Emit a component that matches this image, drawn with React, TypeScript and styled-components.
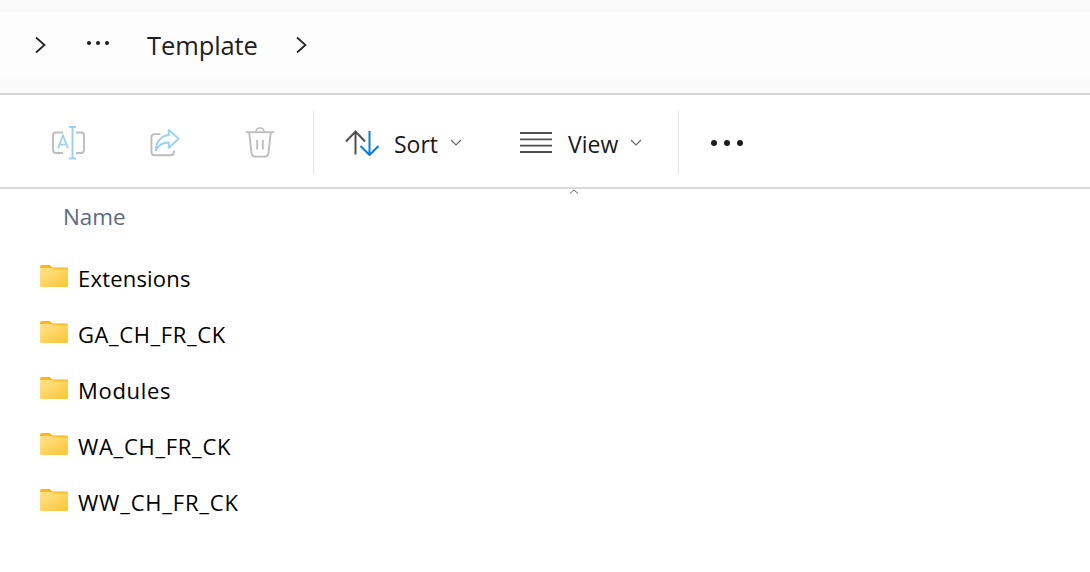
import React from "react";
import styled, { createGlobalStyle } from "styled-components";

const GlobalStyle = createGlobalStyle`
  html, body {
    margin: 0;
    padding: 0;
    background: #fff;
    font-family: "Open Sans", "Noto Sans", sans-serif;
  }
`;

const folders = [
  { name: "Extensions", tracking: 0.2 },
  { name: "GA_CH_FR_CK", tracking: 0.6 },
  { name: "Modules", tracking: 0.7 },
  { name: "WA_CH_FR_CK", tracking: 0.7 },
  { name: "WW_CH_FR_CK", tracking: 0.8 },
];

const Chevron = () => (
  <svg width="14" height="18" viewBox="0 0 14 18" fill="none">
    <path d="M3 1.5 L11.5 9 L3 16.5" stroke="#222" strokeWidth="1.7" />
  </svg>
);

const SmallCaret = () => (
  <svg width="12" height="8" viewBox="0 0 12 8" fill="none">
    <path d="M1 1 L6 6 L11 1" stroke="#666" strokeWidth="1.2" />
  </svg>
);

const RenameIcon = () => (
  <svg width="34" height="34" viewBox="0 0 34 34" fill="none">
    <path d="M12 6.5 H5 Q2 6.5 2 9.5 V24 Q2 27 5 27 H12 M25 6.5 H30 Q33 6.5 33 9.5 V24 Q33 27 30 27 H25" stroke="#bdbdbd" strokeWidth="1.9" />
    <path d="M18 1 H25 M18 32.5 H25 M21.5 1 V32.5" stroke="#9bcff4" strokeWidth="1.9" />
    <path d="M7 22.5 L12 9.5 L17 22.5 M8.6 18.5 H15.4" stroke="#9bcff4" strokeWidth="1.7" />
  </svg>
);

const ShareIcon = () => (
  <svg width="30" height="30" viewBox="0 0 32 32" fill="none">
    <path d="M11 6.5 H5 Q1.5 6.5 1.5 10 V25.5 Q1.5 29 5 29 H22 Q25.5 29 25.5 25.5 V24" stroke="#bdbdbd" strokeWidth="2" />
    <path d="M20 2 L30.5 11.5 L20 21 V15.5 C13 15.5 9 18.5 6 24 C6.5 15 12 8 20 7.5 Z" stroke="#9bcff4" strokeWidth="2" strokeLinejoin="round" />
  </svg>
);

const TrashIcon = () => (
  <svg width="30" height="32" viewBox="0 0 32 34" fill="none" stroke="#bdbdbd">
    <path d="M1 5.5 H31" strokeWidth="2" />
    <path d="M11.5 5 Q12 1 16 1 Q20 1 20.5 5" strokeWidth="1.6" />
    <path d="M4.5 6 L7 28 Q7.5 31.5 11 31.5 H21 Q24.5 31.5 25 28 L27.5 6" strokeWidth="2" />
    <path d="M13 13.5 V24 M19 13.5 V24" strokeWidth="2" />
  </svg>
);

const SortIcon = () => (
  <svg width="34" height="26" viewBox="0 0 34 26" fill="none">
    <path d="M1 11.5 L10.5 1.5 L20 11.5 M10.5 1.5 V24.5" stroke="#4f4f4f" strokeWidth="2" />
    <path d="M15.5 16 L24.5 25 L33.5 16 M24.5 1 V25" stroke="#0b7ddb" strokeWidth="2" />
  </svg>
);

const ViewIcon = () => (
  <svg width="33" height="21" viewBox="0 0 33 21" fill="none" stroke="#4f4f4f" strokeWidth="1.8">
    <path d="M0 1 H32 M0 7.3 H32 M0 13.6 H32 M0 20 H32" />
  </svg>
);

const FolderIcon = () => (
  <FolderBox>
    <svg width="28" height="22" viewBox="0 0 28 22" fill="none">
      <defs>
        <linearGradient id="folderFill" x1="0" y1="0" x2="1" y2="1">
          <stop offset="0" stopColor="#ffe58f" />
          <stop offset="1" stopColor="#fcc433" />
        </linearGradient>
      </defs>
      <path d="M0 2 Q0 0 2 0 H9 Q10.5 0 12 2 L13 3.5 H0 Z" fill="#fbb815" />
      <path d="M0 5.5 Q0 4 1.5 4 L11 4 L13 2.5 H26.5 Q28 2.5 28 4 V20.5 Q28 22 26.5 22 H1.5 Q0 22 0 20.5 Z" fill="url(#folderFill)" />
      <path d="M13 2.5 H26.5 Q28 2.5 28 4 V4.5 H11.5 Z" fill="#fbc02d" />
    </svg>
  </FolderBox>
);

export default function App() {
  return (
    <Page>
      <GlobalStyle />
      <TopStrip />
      <Breadcrumbs>
        <CrumbChevron>
          <Chevron />
        </CrumbChevron>
        <CrumbDots>
          <Dot $size={4} />
          <Dot $size={4} />
          <Dot $size={4} />
        </CrumbDots>
        <CrumbLabel>Template</CrumbLabel>
        <Chevron />
      </Breadcrumbs>
      <LowerStrip />
      <Toolbar>
        <IconGroup>
          <RenameIcon />
          <ShareIcon />
          <TrashIcon />
        </IconGroup>
        <Divider />
        <ToolButton $width={175}>
          <SortIcon />
          <ToolLabel>Sort</ToolLabel>
          <SmallCaret />
        </ToolButton>
        <ToolButton $width={189}>
          <ViewIcon />
          <ToolLabel>View</ToolLabel>
          <SmallCaret />
        </ToolButton>
        <Divider />
        <MoreDots>
          <Dot $size={6} />
          <Dot $size={6} />
          <Dot $size={6} />
        </MoreDots>
        <SortCaret>
          <svg width="10" height="5" viewBox="0 0 10 5" fill="none">
            <path d="M1 4.5 L5 1 L9 4.5" stroke="#666" strokeWidth="1" />
          </svg>
        </SortCaret>
      </Toolbar>
      <ColumnHeader>Name</ColumnHeader>
      <FileList>
        {folders.map((folder) => (
          <FileRow key={folder.name}>
            <FolderIcon />
            <FileName $tracking={folder.tracking}>{folder.name}</FileName>
          </FileRow>
        ))}
      </FileList>
    </Page>
  );
}

const Page = styled.div`
  width: 1090px;
  height: 572px;
  overflow: hidden;
  background: #fff;
  color: #1a1a1a;
`;

const TopStrip = styled.div`
  height: 12px;
  background: #f9f9f9;
`;

const Breadcrumbs = styled.div`
  height: 65px;
  padding-left: 33px;
  display: flex;
  align-items: center;
  background: #fdfdfd;
`;

const CrumbChevron = styled.div`
  display: flex;
  width: 54px;
`;

const CrumbDots = styled.div`
  display: flex;
  gap: 5px;
  width: 60px;
  margin-bottom: 3px;
`;

const Dot = styled.span<{ $size: number }>`
  width: ${(p) => p.$size}px;
  height: ${(p) => p.$size}px;
  border-radius: 50%;
  background: #1c1c1c;
`;

const CrumbLabel = styled.span`
  font-size: 25.5px;
  width: 147px;
  color: #1f1f1f;
  letter-spacing: -0.1px;
`;

const LowerStrip = styled.div`
  height: 16px;
  background: #fafafa;
  border-bottom: 2px solid #d6d6d6;
`;

const Toolbar = styled.div`
  position: relative;
  box-sizing: border-box;
  height: 94px;
  padding-top: 3px;
  display: flex;
  align-items: center;
  border-bottom: 2px solid #d9d9d9;
  background: #fff;
`;

const IconGroup = styled.div`
  display: flex;
  align-items: center;
  padding-left: 51px;
  gap: 65px;
  width: 262px;
`;

const Divider = styled.div`
  width: 1px;
  height: 63px;
  background: #e6e6e6;
`;

const ToolButton = styled.div<{ $width: number }>`
  display: flex;
  align-items: center;
  width: ${(p) => p.$width}px;
  padding-left: 31px;
  box-sizing: border-box;
`;

const ToolLabel = styled.span`
  font-size: 23px;
  margin: 2px 12px 0 15px;
  color: #1a1a1a;
`;

const MoreDots = styled.div`
  display: flex;
  gap: 7px;
  margin-left: 32px;
`;

const SortCaret = styled.div`
  position: absolute;
  left: 569px;
  bottom: -7px;
  display: flex;
`;

const ColumnHeader = styled.div`
  font-size: 22.4px;
  color: #5b6a82;
  padding: 12px 0 0 63px;
  height: 45px;
`;

const FileList = styled.div`
  display: flex;
  flex-direction: column;
  padding: 4px 0 0 40px;
`;

const FileRow = styled.div`
  display: flex;
  align-items: center;
  height: 56px;
`;

const FolderBox = styled.div`
  display: flex;
  margin-bottom: 4px;
`;

const FileName = styled.span<{ $tracking: number }>`
  font-size: 22px;
  margin-left: 10px;
  color: #000;
  letter-spacing: ${(p) => p.$tracking}px;
`;
